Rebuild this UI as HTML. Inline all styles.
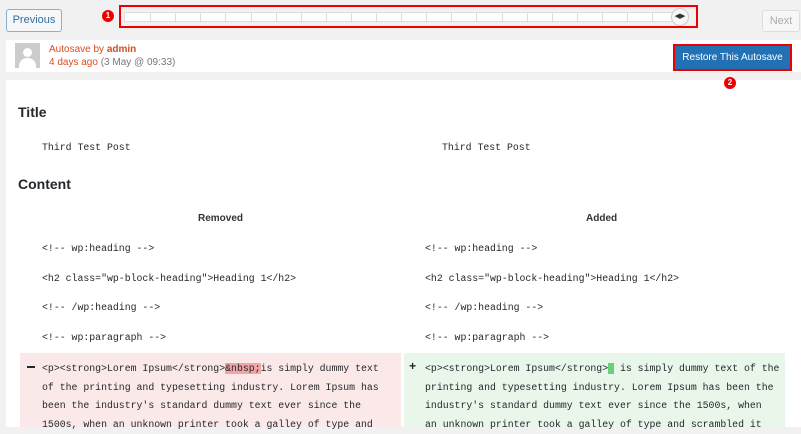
<!DOCTYPE html>
<html><head><style>
body{margin:0;width:801px;height:427px;background:#f1f1f1;font-family:"Liberation Sans",sans-serif;position:relative;overflow:hidden}
.a{position:absolute}
.m{font-family:"Liberation Mono",monospace;font-size:9.85px;color:#23282d;white-space:pre}
.btn{border:1px solid #8ab0cc;border-radius:3px;background:#f7f7f7;color:#2e6fa5;font-size:11px;text-align:center;box-sizing:border-box}
.badge{width:12px;height:12px;border-radius:50%;background:#e00;color:#fff;font-size:8px;font-weight:bold;text-align:center;line-height:12px;z-index:5}
.tick{position:absolute;top:0;width:1px;height:10px;background:#ddd}
h{position:absolute;font-size:14px;color:#23282d;font-weight:bold}
</style></head><body>
<div class="a btn" style="left:6px;top:9px;width:56px;height:23px;line-height:21px">Previous</div>
<div class="a badge" style="left:102px;top:10px">1</div>
<div class="a" style="left:119px;top:5px;width:579px;height:23px;border:2px solid #e00;box-sizing:border-box"></div>
<div class="a" style="left:124px;top:12px;width:552px;height:10px;background:#fff;border:1px solid #ddd;box-sizing:border-box" id="bar"></div>
<div class="a" style="left:671px;top:8px;width:18px;height:18px;border-radius:50%;background:#f7f7f7;border:1px solid #ccc;box-sizing:border-box;font-size:7px;line-height:16px;text-align:center;color:#333">◀▶</div>
<div class="a btn" style="left:762px;top:10px;width:38px;height:22px;line-height:20px;color:#aaa;border-color:#ddd">Next</div>
<div class="a" style="left:6px;top:40px;width:795px;height:32px;background:#fff"></div>
<div class="a" style="left:15px;top:43px;width:25px;height:25px;background:#ccc;overflow:hidden"><div class="a" style="left:8px;top:5px;width:9px;height:9px;border-radius:50%;background:#fff"></div><div class="a" style="left:4px;top:15px;width:17px;height:12px;border-radius:8px 8px 0 0;background:#fff"></div></div>
<div class="a" style="left:49px;top:44px;font-size:10px;color:#d54e21">Autosave by <b>admin</b></div>
<div class="a" style="left:49px;top:57px;font-size:10px;color:#d54e21">4 days ago <span style="color:#777">(3 May @ 09:33)</span></div>
<div class="a" style="left:673px;top:44px;width:119px;height:27px;border:2px solid #e00;box-sizing:border-box;background:#2371b5;color:#fff;font-size:10px;text-align:center;line-height:23px">Restore This Autosave</div>
<div class="a" style="left:6px;top:80px;width:795px;height:347px;background:#fff"></div>
<div class="a badge" style="left:724px;top:77px">2</div>
<h style="left:18px;top:104px">Title</h>
<div class="a m" style="left:42px;top:142px">Third Test Post</div>
<div class="a m" style="left:442px;top:142px">Third Test Post</div>
<h style="left:18px;top:176px">Content</h>
<div class="a" style="left:198px;top:213px;font-size:10px;font-weight:bold;color:#333">Removed</div>
<div class="a" style="left:586px;top:213px;font-size:10px;font-weight:bold;color:#333">Added</div>
<div class="a m" style="left:42px;top:243px">&lt;!-- wp:heading --&gt;</div>
<div class="a m" style="left:425px;top:243px">&lt;!-- wp:heading --&gt;</div>
<div class="a m" style="left:42px;top:273px">&lt;h2 class="wp-block-heading"&gt;Heading 1&lt;/h2&gt;</div>
<div class="a m" style="left:425px;top:273px">&lt;h2 class="wp-block-heading"&gt;Heading 1&lt;/h2&gt;</div>
<div class="a m" style="left:42px;top:302px">&lt;!-- /wp:heading --&gt;</div>
<div class="a m" style="left:425px;top:302px">&lt;!-- /wp:heading --&gt;</div>
<div class="a m" style="left:42px;top:332px">&lt;!-- wp:paragraph --&gt;</div>
<div class="a m" style="left:425px;top:332px">&lt;!-- wp:paragraph --&gt;</div>
<div class="a" style="left:20px;top:353px;width:381px;height:74px;background:#fbe9e9"></div>
<div class="a" style="left:404px;top:353px;width:381px;height:74px;background:#e9f6ea"></div>
<div class="a" style="left:27px;top:366px;width:8px;height:1.5px;background:#23282d"></div>
<div class="a m" style="left:409px;top:360px;font-weight:bold;font-size:12px">+</div>
<div class="a m" style="left:42px;top:360px;line-height:18.6px">&lt;p&gt;&lt;strong&gt;Lorem Ipsum&lt;/strong&gt;<span style="background:#f1a5a5">&amp;nbsp;</span>is simply dummy text
of the printing and typesetting industry. Lorem Ipsum has
been the industry's standard dummy text ever since the
1500s, when an unknown printer took a galley of type and</div>
<div class="a m" style="left:425px;top:360px;line-height:18.6px">&lt;p&gt;&lt;strong&gt;Lorem Ipsum&lt;/strong&gt;<span style="background:#68d07a"> </span> is simply dummy text of the
printing and typesetting industry. Lorem Ipsum has been the
industry's standard dummy text ever since the 1500s, when
an unknown printer took a galley of type and scrambled it</div>
<script>
var b=document.getElementById('bar');
for(var i=1;i<22;i++){var t=document.createElement('div');t.className='tick';t.style.left=(i*25.1)+'px';b.appendChild(t);}
</script>
</body></html>
